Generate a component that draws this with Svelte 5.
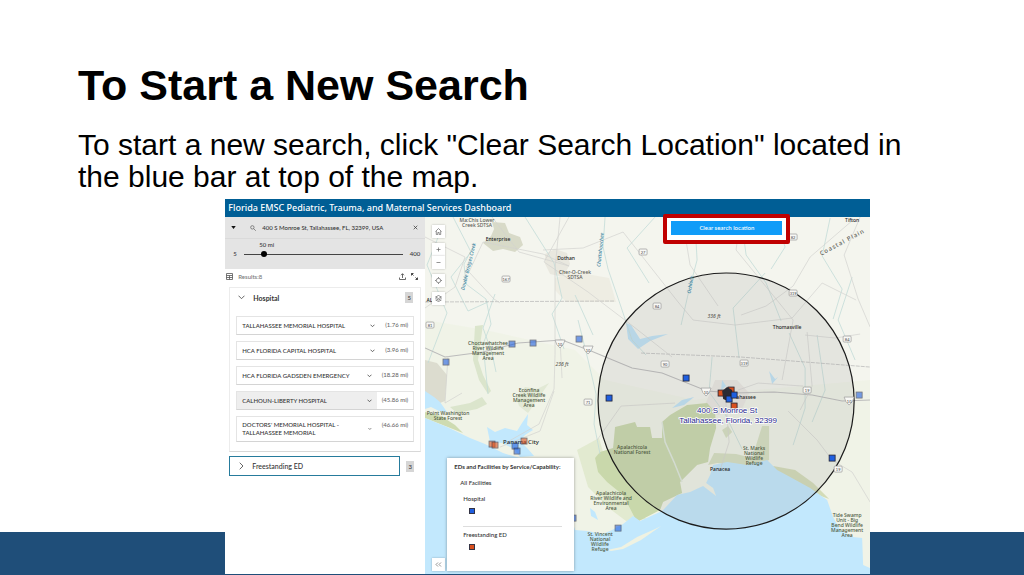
<script lang="ts">
  type Label = { x: number; y: number; lines: string[]; kind?: string; rotate?: number };
  type Pin = { x: number; y: number; type: string; faded?: boolean };

  let query = $state('400 S Monroe St, Tallahassee, FL, 32399, USA');
  let radius = $state(50);
  let hospitalOpen = $state(true);

  const hospitals = [
    { name: 'TALLAHASSEE MEMORIAL HOSPITAL', distance: '(1.76 mi)' },
    { name: 'HCA FLORIDA CAPITAL HOSPITAL', distance: '(3.96 mi)' },
    { name: 'HCA FLORIDA GADSDEN EMERGENCY', distance: '(18.28 mi)' },
    { name: 'CALHOUN-LIBERTY HOSPITAL', distance: '(45.86 mi)', active: true },
    { name: "DOCTORS' MEMORIAL HOSPITAL - TALLAHASSEE MEMORIAL", distance: '(46.66 mi)' }
  ];

  const labels: Label[] = [
    { x: 477, y: 222, lines: ['Ma:Chis Lower', 'Creek SDTSA'] },
    { x: 498, y: 241, lines: ['Enterprise'], kind: 'town' },
    { x: 566, y: 260, lines: ['Dothan'], kind: 'town' },
    { x: 575, y: 274, lines: ['Cher-O-Creek', 'SDTSA'] },
    { x: 787, y: 329, lines: ['Thomasville'], kind: 'town' },
    { x: 488, y: 345, lines: ['Choctawhatchee', 'River Wildlife', 'Management', 'Area'], kind: 'park' },
    { x: 529, y: 392, lines: ['Econfina', 'Creek Wildlife', 'Management', 'Area'], kind: 'park' },
    { x: 448, y: 415, lines: ['Point Washington', 'State Forest'], kind: 'park' },
    { x: 521, y: 444, lines: ['Panama City'], kind: 'city' },
    { x: 746, y: 399, lines: ['ahassee'], kind: 'town' },
    { x: 632, y: 449, lines: ['Apalachicola', 'National Forest'], kind: 'park' },
    { x: 754, y: 450, lines: ['St. Marks', 'National', 'Wildlife', 'Refuge'], kind: 'park' },
    { x: 720, y: 471, lines: ['Panacea'], kind: 'town' },
    { x: 611, y: 495, lines: ['Apalachicola', 'River Wildlife and', 'Environmental', 'Area'], kind: 'park' },
    { x: 600, y: 536, lines: ['St. Vincent', 'National', 'Wildlife', 'Refuge'], kind: 'park' },
    { x: 847, y: 517, lines: ['Tide Swamp', 'Unit - Big', 'Bend Wildlife', 'Management', 'Area'], kind: 'park' },
    { x: 562, y: 366, lines: ['236 ft'], kind: 'peak' },
    { x: 714, y: 318, lines: ['336 ft'], kind: 'peak' },
    { x: 843, y: 244, lines: ['Coastal Plain'], kind: 'region', rotate: -28 },
    { x: 470, y: 267, lines: ['Double Bridges Creek'], kind: 'river', rotate: -76 },
    { x: 602, y: 250, lines: ['Chattahoochee'], kind: 'river', rotate: -84 },
    { x: 692, y: 285, lines: ['Ochlock'], kind: 'river', rotate: -80 },
    { x: 852, y: 222, lines: ['Tifton'], kind: 'town' },
    { x: 431, y: 302, lines: ['ALA'], kind: 'town' }
  ];

  const shields = [
    { x: 506, y: 279, num: '167' },
    { x: 643, y: 252, num: '27' },
    { x: 657, y: 306, num: '84' },
    { x: 793, y: 237, num: '82' },
    { x: 793, y: 293, num: '319' },
    { x: 847, y: 339, num: '84' },
    { x: 744, y: 363, num: '319' },
    { x: 665, y: 364, num: '90' },
    { x: 807, y: 390, num: '19' },
    { x: 588, y: 402, num: '71' },
    { x: 838, y: 469, num: '19' },
    { x: 430, y: 325, num: '81' },
    { x: 560, y: 344, num: '10', interstate: true },
    { x: 588, y: 350, num: '10', interstate: true },
    { x: 706, y: 392, num: '10', interstate: true },
    { x: 849, y: 401, num: '10', interstate: true }
  ];

  const pins: Pin[] = [
    { x: 512, y: 344, type: 'hospital', faded: true },
    { x: 533, y: 343, type: 'hospital', faded: true },
    { x: 579, y: 339, type: 'hospital', faded: true },
    { x: 446, y: 362, type: 'hospital', faded: true },
    { x: 515, y: 446, type: 'hospital', faded: true },
    { x: 517, y: 451, type: 'hospital', faded: true },
    { x: 573, y: 518, type: 'hospital', faded: true },
    { x: 618, y: 528, type: 'hospital', faded: true },
    { x: 859, y: 395, type: 'hospital', faded: true },
    { x: 492, y: 444, type: 'ed', faded: true },
    { x: 495, y: 445, type: 'ed', faded: true },
    { x: 524, y: 441, type: 'ed', faded: true },
    { x: 609, y: 398, type: 'hospital' },
    { x: 686, y: 378, type: 'hospital' },
    { x: 832, y: 458, type: 'hospital' },
    { x: 731, y: 390, type: 'ed' },
    { x: 721, y: 393, type: 'ed' },
    { x: 734, y: 406, type: 'ed' }
  ];
</script>

<main class="slide">
  <h1>To Start a New Search</h1>
  <p class="lead">To start a new search, click "Clear Search Location" located in the blue bar at top of the map.</p>

  <section class="dashboard">
    <header>Florida EMSC Pediatric, Trauma, and Maternal Services Dashboard</header>

    <div class="content">
      <aside>
        <div class="search">
          <div class="search-row">
            <button class="icon" aria-label="Search sources">
              <svg width="5" height="3" viewBox="0 0 6 4"><path d="M0 0h6L3 4z" fill="#111" /></svg>
            </button>
            <svg class="glass" width="6" height="6" viewBox="0 0 14 14" fill="none" stroke="#555" stroke-width="1.5">
              <circle cx="5.5" cy="5.5" r="4" /><path d="M8.5 8.5l5 5" />
            </svg>
            <input type="text" aria-label="Search location" bind:value={query} />
            <button class="icon" aria-label="Clear" onclick={() => (query = '')}>
              <svg width="5" height="5" viewBox="-1 -1 7 7" stroke="#333" stroke-width="1"><path d="M0 0l5 5M5 0L0 5" /></svg>
            </button>
          </div>
          <div class="slider">
            <output for="radius">{radius} mi</output>
            <div class="slider-row">
              <label for="radius">5</label>
              <input id="radius" type="range" min="5" max="400" bind:value={radius} />
              <span>400</span>
            </div>
          </div>
        </div>

        <div class="results-bar">
          <svg width="7" height="7" viewBox="0 0 7 7" fill="none" stroke="#555" stroke-width="0.8">
            <path d="M.5.5h6v6h-6zM.5 2.5h6M.5 4.5h6M3.5 2.5v4" />
          </svg>
          <span>Results:8</span>
          <button class="icon" aria-label="Export">
            <svg width="7" height="7" viewBox="0 0 7 7" fill="none" stroke="#444" stroke-width="0.8">
              <path d="M.5 4.5v2h6v-2M3.5 5V.8M2 2.2L3.5.7 5 2.2" />
            </svg>
          </button>
          <button class="icon" aria-label="Expand">
            <svg width="7" height="7" viewBox="0 0 7 7" fill="none" stroke="#333" stroke-width="0.9">
              <path d="M.5 2.5v-2h2M.5.5l2 2M6.5 4.5v2h-2M6.5 6.5l-2-2" />
            </svg>
          </button>
        </div>

        <div class="group">
          <button class="group-head" onclick={() => (hospitalOpen = !hospitalOpen)}>
            <svg width="7" height="5" viewBox="0 0 7 5" fill="none" stroke="#555" stroke-width="0.9"><path d="M.5.7l3 3 3-3" /></svg>
            <span>Hospital</span>
            <b class="badge">5</b>
          </button>
          {#if hospitalOpen}
            <ul>
              {#each hospitals as item}
                <li>
                  <button class="item" class:active={item.active}>
                    <span>{item.name}</span>
                    <svg width="5" height="4" viewBox="0 0 5 4" fill="none" stroke="#555" stroke-width="0.9"><path d="M.5.7l2 2 2-2" /></svg>
                  </button>
                  <span class="distance">{item.distance}</span>
                </li>
              {/each}
            </ul>
          {/if}
        </div>

        <div class="closed-group">
          <button>
            <svg width="5" height="8" viewBox="0 0 5 8" fill="none" stroke="#555" stroke-width="0.9"><path d="M.7.7L4 4 .7 7.3" /></svg>
            <span>Freestanding ED</span>
          </button>
          <b class="badge">3</b>
        </div>
      </aside>

      <div class="map">
        <svg class="canvas" viewBox="425 217 445 357" preserveAspectRatio="xMinYMin slice">
          <rect x="425" y="217" width="445" height="360" fill="#f4f5ee" />

          <!-- lowlands and built-up areas -->
          <path d="M425 320l60 10 90 20 30 30 90 20 60-10 115-10v190H425z" fill="#eff3e5" opacity=".8" />
          <path d="M492 222l13 1 4 10 11 4 3 8-8 7-12-3-10 2-10-8 8-7 3-7z" fill="#d8dac8" />
          <path d="M545 254l10-5 12 4 3 11-7 13-13-3-5-10z" fill="#e9e8df" />
          <path d="M555 278l20-6 34 6 7 24h-50l-11-12z" fill="#eeede3" />
          <path d="M425 360l12 3 10 12-2 26-10 4-10-8z" fill="#dcdccf" />
          <path d="M715 380l22 0 12 13-8 18-24 4-12-10z" fill="#eae7e2" />

          <!-- forests -->
          <path d="M577 450l22-12 10 35 25 32 12 14-20 2-16-12-22-22z" fill="#e2ead0" />
          <path
            d="M595 458L600 452 613 448 615 427 635 422 637 427 650 427 652 438 662 438 662 422 670 415 687 405 707 403 715 412 716 428 710 448 708 462 697 465 680 482 682 493 663 502 660 510 637 522 623 495 607 482 598 472z"
            fill="#c9d8ab"
          />
          <path d="M662 422l3 20 9 20 8 20" fill="none" stroke="#dfe9dc" stroke-width="1.5" />
          <path d="M425 412l16 4 14 9 8 8-38-15z" fill="#cedbb1" />
          <path d="M450 407l20-4 12-6 5 7-10 5-20 4zM483 325l-3 20-2 15 5 15 8 16-3 3-9-14-6-20 2-34z" fill="#dbe5cc" />
          <path d="M516 397l9-10 12 2 12-6-12 17-9 13-9-7z" fill="#e2e9d5" />
          <path d="M722 430l6-4 4 6-6 6zM762 426h7v34l-14 6-38-3-9 2 6-12 22 1 16 4z" fill="#d6dfc0" />
          <path d="M773 466l22 4 18 13 16 16-11-4-24-14-18-8z" fill="#d3dcb7" />

          <!-- Gulf coast and bays -->
          <path
            d="M425 418L447 427 470 438 485 444 503 453 520 458 560 480 575 530 587 531 603 534 612 530 623 524 633 516 640 521 662 511 677 495 690 492 703 486 716 496 713 488 706 483 710 475 713 465 727 462 747 465 767 460 777 470 790 477 810 488 827 500 833 517 840 530 853 537 862 538 863 565 870 568 870 577 425 577z"
            fill="#c2e8fd"
          />
          <path d="M425 391l9 6 6 5 7 10-8-1-8-4-6 2z" fill="#c2e8fd" />
          <path d="M487 427l8 5 10-4 12 3 5-8 6-9-1 11 6 5-8 5-5 6 8 8 6 7-14 1-6-8-12-6-12-1zM590 508l5 4 3 8-7-4z" fill="#c2e8fd" />
          <path d="M626 323l2 16 10 10 12-8 18-7-16 2-12 3-9-14zM672 408l10-8 12-3-10 8zM769 371l6 8 3-2-6 7zM722 380l4 6-5 4z" fill="#bfe3f6" />
          <path d="M607 550l14-3 16-10 18-8 6-3-20 14-18 9-12 2z" fill="#eff2e2" />

          <!-- rivers -->
          <g class="streams">
            <path d="M472 249l-8 15 2 20 20 15 5 25-8 20 5 50M495 294l-12 34 9 25 4 19" />
            <path d="M605 217l-2 30 5 22 12 35 12 36 14 15M578 320l10 40 8 34-2 30 6 30M575 295l18 40" />
            <path d="M695 225l2 35-8 30-8 35M741 217l5 38 20 28 15 38M775 217l10 30-14 22M830 218l-8 38 20 33-9 30" />
            <path d="M789 333l16 35v40l-12 37M817 335l8 55-13 32M712 357l-3 35 16 22 17 35M453 217l18 35-20 25 17 34 20-9" />
            <path d="M443 225l-16 40 20 48-19 50M525 217l29 46 8 35-10 16 12 35" />
            <path d="M765 273l-32 35 6 50M655 217l-28 31 22 35M852 277l-14 43 17 40" />
          </g>

          <!-- roads -->
          <g class="roads">
            <path d="M425 348l20 9 38-5 35-9 44-3 29 11 41 17 30 5 45 18 27 2 40-1 38 3 30 6 28-1" class="main" />
            <path d="M425 302l190-1" class="border" />
            <path d="M641 353l100 4 129 10" class="border" />
            <path d="M560 217l-5 52v85l-1 35-15 35-30 17M483 242l-14 30 25 27 6 4M483 242l60 12 26 12-50-14-27-35" />
            <path d="M569 217l-25 45 44 30 46 35 38 30M543 250l40-2 40-16 55 70 15 18 42 5 57-7 30-35 34 17" />
            <path d="M682 217l8 48 28 41M740 217l-4 33 31 38 26 32-11 60M860 217l-16 38 14 44 12 28M805 335l30 3 25-4M741 315l25-9 27-20 17-29 44-38" />
            <path d="M725 394l4 48-9 28M788 411l29 29 15 20 20 12 18 30M738 390l20-7 45 3M448 356l-3 47 17-10M425 237l40 20-10 30-30 21" />
            <path d="M500 447l40-16 14-40M562 378l-2-38M800 410l12-24-5-54M597 440l24-34 54-3" />
          </g>

          <circle cx="726" cy="401" r="128" class="buffer" />

          {#each shields as s}
            <g transform="translate({s.x} {s.y})">
              {#if s.interstate}
                <path class="shield" d="M-5-4h10q-1 5-5 8q-4-3-5-8z" />
              {:else}
                <rect class="shield" x="-4" y="-3" width="8" height="6" rx="1" />
              {/if}
              <text class="num" y="2">{s.num}</text>
            </g>
          {/each}

          {#each labels as label}
            <text class="label {label.kind}" transform="translate({label.x} {label.y}) rotate({label.rotate ?? 0})">
              {#each label.lines as line, i}
                <tspan x="0" y={i * 5}>{line}</tspan>
              {/each}
            </text>
          {/each}

          {#each pins as pin}
            <rect class="pin {pin.type}" class:faded={pin.faded} x={pin.x - 3} y={pin.y - 3} width="6" height="6" />
          {/each}
          <path d="M722 391l5-4 5 3 1 6-3 6-7-3z" fill="#2b2b33" />
          <rect class="pin hospital" x="726" y="396" width="6" height="6" />
          <rect class="pin hospital" x="731" y="392" width="6" height="6" />

          <text class="address" x="727" y="413">400 S Monroe St</text>
          <text class="address" x="728" y="423">Tallahassee, Florida, 32399</text>
        </svg>

        <div class="tools">
          <button aria-label="Home">
            <svg viewBox="0 0 7 7"><path d="M.5 3.5l3-3 3 3M1.3 3v3.5h1.5v-2h1.4v2h1.5V3" /></svg>
          </button>
          <div class="zoom">
            <button aria-label="Zoom in"><svg viewBox="0 0 7 7"><path d="M1.500 3.500h4M3.500 1.500v4" /></svg></button>
            <button aria-label="Zoom out"><svg viewBox="0 0 7 7"><path d="M1.500 3.500h4" /></svg></button>
          </div>
          <button aria-label="Find my location">
            <svg viewBox="0 0 7 7"><circle cx="3.5" cy="3.5" r="2.2" /><path d="M3.5 0v1.300M3.5 5.700V7M0 3.5h1.300M5.700 3.5H7" /></svg>
          </button>
          <button aria-label="Layers">
            <svg viewBox="0 0 7 7"><path d="M.5 2l3-1.500 3 1.500-3 1.500zM.5 3.500l3 1.500 3-1.500M.5 5l3 1.500 3-1.500" /></svg>
          </button>
        </div>

        <div class="highlight">
          <button onclick={() => (query = '')}>Clear search location</button>
        </div>

        <button class="collapse" aria-label="Hide legend">
          <svg viewBox="0 0 7 7"><path d="M3 1.500l-2 2 2 2M6 1.500l-2 2 2 2" /></svg>
        </button>
        <div class="legend">
          <h2>EDs and Facilities by Service/Capability:</h2>
          <h3>All Facilities</h3>
          <div class="entry">
            <span>Hospital</span>
            <i class="swatch hospital"></i>
          </div>
          <div class="entry">
            <span>Freestanding ED</span>
            <i class="swatch ed"></i>
          </div>
        </div>
      </div>
    </div>
  </section>
</main>

<style>
  :global(body) {
    background: #fff;
  }

  * {
    box-sizing: border-box;
  }

  button {
    font: inherit;
    color: inherit;
    border: none;
    background: none;
    padding: 0;
    cursor: pointer;
  }

  .slide {
    min-height: 100vh;
    display: flex;
    flex-direction: column;
    padding: 61px 0 1px;
    font-family: "Liberation Sans", Arial, sans-serif;
    color: #000;
    background: linear-gradient(to top, #1f4e79 43px, transparent 43px);
  }

  h1 {
    margin: 0 78px 20px;
    font-size: 43px;
    line-height: 48px;
  }

  .lead {
    margin: 0 120px 6px 78px;
    font-size: 30px;
    line-height: 32px;
  }

  .dashboard {
    flex: 1;
    display: flex;
    flex-direction: column;
    width: 63%;
    margin-left: 22%;
    background: #fff;
    font-family: Lato, sans-serif;
    font-size: 6px;
    font-weight: 500;
    line-height: 8px;
    color: #333;
  }

  header {
    padding: 0 3px;
    background: #005e95;
    color: #fff;
    font-family: "Noto Sans", sans-serif;
    font-size: 9px;
    line-height: 18px;
  }

  .content {
    flex: 1;
    display: flex;
  }

  aside {
    width: 31%;
    flex-shrink: 0;
  }

  .search {
    background: #e4e4e4;
    height: 52px;
  }

  .search-row {
    display: flex;
    align-items: center;
    height: 22px;
    padding: 0 7px 0 6px;
    border-bottom: 1px solid #dadada;
  }

  .icon {
    display: flex;
  }

  .glass {
    margin: 0 6px 0 14px;
  }

  input[type='text'] {
    flex: 1;
    min-width: 0;
    padding: 0;
    border: none;
    background: none;
    font: inherit;
    color: #333;
    outline: none;
  }

  .slider output {
    display: block;
    padding: 2px 0 0 34px;
  }

  .slider-row {
    display: flex;
    align-items: center;
    gap: 7px;
    padding: 1px 5px 0 8px;
  }

  input[type='range'] {
    flex: 1;
    min-width: 0;
    height: 8px;
    margin: 0;
    appearance: none;
    background: linear-gradient(#444, #444) center / 100% 1px no-repeat;
  }

  input[type='range']::-webkit-slider-thumb {
    appearance: none;
    width: 6px;
    height: 6px;
    border-radius: 50%;
    background: #000;
  }

  .results-bar {
    display: flex;
    align-items: center;
    gap: 5px;
    height: 15px;
    padding: 0 7px 0 1px;
    color: #777;
  }

  .results-bar span {
    flex: 1;
  }

  .group {
    margin: 3px 4px 0;
    padding-bottom: 9px;
    border: 1px solid #ececec;
    border-bottom-color: #d8d8d8;
  }

  .group-head {
    display: flex;
    align-items: center;
    gap: 8px;
    width: 100%;
    height: 19px;
    padding: 0 7px 0 8px;
    text-align: left;
    font-size: 7px;
    font-weight: 700;
  }

  .group-head span {
    flex: 1;
  }

  .badge {
    width: 8px;
    line-height: 11px;
    background: #d6d6d6;
    text-align: center;
    font-size: 6px;
    font-weight: 400;
  }

  ul {
    display: flex;
    flex-direction: column;
    gap: 6px;
    margin: 9px 6px 0;
    padding: 0;
    list-style: none;
  }

  li {
    display: flex;
    min-height: 19px;
    border: 1px solid #e4e4e4;
    border-bottom-color: #d4d4d4;
  }

  .item {
    flex: 1;
    display: flex;
    align-items: center;
    justify-content: space-between;
    padding: 4px 5px;
    text-align: left;
  }

  .active {
    background: #eee;
  }

  .distance {
    padding: 4px 5px;
    color: #666;
  }

  .closed-group {
    display: flex;
    align-items: center;
    gap: 6px;
    margin: 4px 11px 0 4px;
  }

  .closed-group button {
    flex: 1;
    display: flex;
    align-items: center;
    gap: 8px;
    height: 20px;
    padding: 0 9px;
    border: 1px solid #267b9c;
    font-size: 7px;
  }

  .map {
    flex: 1;
    position: relative;
    min-height: 357px;
  }

  .canvas {
    position: absolute;
    width: 100%;
    height: 100%;
  }

  .streams path,
  .roads path {
    fill: none;
  }

  .streams path {
    stroke: #c3dcd8;
    stroke-width: 0.8;
  }

  .roads path {
    stroke: #d3d3d0;
    stroke-width: 0.7;
  }

  .roads .main {
    stroke: #bbb;
    stroke-width: 1;
  }

  .roads .border {
    stroke: #b5b5b5;
    stroke-dasharray: 4 1;
  }

  .buffer {
    fill: rgba(150, 150, 150, 0.16);
    stroke: #1b1b1b;
    stroke-width: 1.2;
  }

  .shield {
    fill: #f8f8f5;
    stroke: #999;
    stroke-width: 0.7;
  }

  .num {
    font-size: 4px;
    text-anchor: middle;
    fill: #555;
  }

  .label {
    font-family: "Noto Sans", sans-serif;
    font-size: 5px;
    text-anchor: middle;
    fill: #5c5c56;
  }

  .park {
    fill: #4d583f;
  }

  .town,
  .city {
    fill: #222;
  }

  .city {
    font-size: 6px;
  }

  .peak {
    font-style: italic;
  }

  .region {
    font-size: 6px;
    letter-spacing: 1px;
  }

  .river {
    fill: #3f86a2;
    font-style: italic;
  }

  .pin {
    stroke: #223;
    stroke-width: 0.8;
  }

  .hospital {
    fill: #1f5fe0;
    background: #1f5fe0;
  }

  .ed {
    fill: #d9501e;
    background: #d9501e;
  }

  .faded {
    opacity: 0.6;
  }

  .address {
    font-family: "Liberation Sans", Arial, sans-serif;
    font-size: 8px;
    text-anchor: middle;
    fill: #26268c;
    stroke: #fff;
    stroke-width: 1.5;
    paint-order: stroke;
  }

  .tools {
    position: absolute;
    top: 8px;
    left: 7px;
    display: flex;
    flex-direction: column;
    gap: 5px;
  }

  .tools button,
  .collapse {
    display: flex;
    align-items: center;
    justify-content: center;
    width: 13px;
    height: 13px;
    background: #fff;
    box-shadow: 0 0 2px rgba(0, 0, 0, 0.25);
  }

  .tools svg,
  .collapse svg {
    width: 7px;
    height: 7px;
    fill: none;
    stroke: #666;
    stroke-width: 0.7;
  }

  .highlight {
    position: absolute;
    top: -3px;
    right: 80px;
    width: 127px;
    height: 30px;
    padding: 3px 4px 4px;
    border: 4px solid #c00000;
    border-radius: 2px;
    background: #fff;
  }

  .highlight button {
    display: block;
    width: 100%;
    height: 14px;
    background: #109cf8;
    color: #fff;
  }

  .collapse {
    position: absolute;
    bottom: 3px;
    left: 7px;
  }

  .legend {
    position: absolute;
    bottom: 3px;
    left: 22px;
    width: 127px;
    height: 113px;
    padding: 5px 7px;
    background: #fff;
    box-shadow: 0 0 3px rgba(0, 0, 0, 0.35);
  }

  .legend h2,
  .legend h3 {
    margin: 0;
    font-size: 6px;
    font-weight: 700;
    white-space: nowrap;
  }

  .legend h3 {
    margin: 8px 6px;
    font-weight: 500;
  }

  .entry {
    margin: 0 5px 0 9px;
  }

  .entry + .entry {
    margin-top: 12px;
    padding-top: 4px;
    border-top: 1px solid #ddd;
  }

  .entry span {
    display: block;
  }

  .swatch {
    display: block;
    width: 6px;
    height: 6px;
    margin: 5px 6px 0;
    outline: 1px solid #334;
    outline-offset: -1px;
  }
</style>
